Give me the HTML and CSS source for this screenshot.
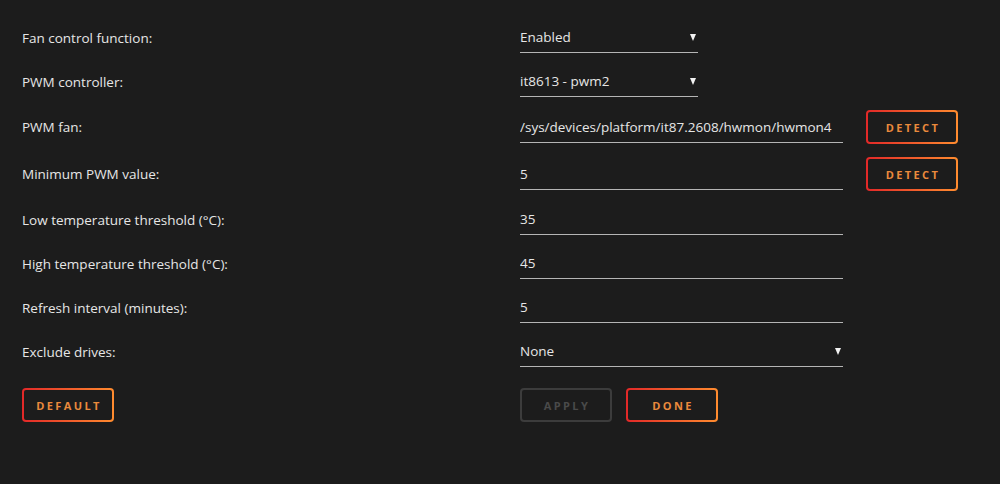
FILE: index.html
```html
<!DOCTYPE html>
<html lang="en">
<head>
  <meta charset="UTF-8" />
  <title>Fan Auto Control</title>
  <link rel="stylesheet" href="styles.css">
</head>
<body>
  <form class="settings">
    <div class="row">
      <label>Fan control function:</label>
      <div class="field select short"><span>Enabled</span><i class="caret"></i></div>
    </div>
    <div class="row">
      <label>PWM controller:</label>
      <div class="field select short"><span>it8613 - pwm2</span><i class="caret"></i></div>
    </div>
    <div class="row">
      <label>PWM fan:</label>
      <div class="field"><span>/sys/devices/platform/it87.2608/hwmon/hwmon4</span></div>
      <button type="button" class="btn detect">Detect</button>
    </div>
    <div class="row">
      <label>Minimum PWM value:</label>
      <div class="field"><span>5</span></div>
      <button type="button" class="btn detect">Detect</button>
    </div>
    <div class="row">
      <label>Low temperature threshold (°C):</label>
      <div class="field"><span>35</span></div>
    </div>
    <div class="row">
      <label>High temperature threshold (°C):</label>
      <div class="field"><span>45</span></div>
    </div>
    <div class="row">
      <label>Refresh interval (minutes):</label>
      <div class="field"><span>5</span></div>
    </div>
    <div class="row">
      <label>Exclude drives:</label>
      <div class="field select"><span>None</span><i class="caret"></i></div>
    </div>
    <div class="row actions">
      <div class="left"><button type="button" class="btn">Default</button></div>
      <button type="button" class="btn" disabled>Apply</button>
      <button type="button" class="btn">Done</button>
    </div>
  </form>
</body>
</html>
```

FILE: styles.css
```css
html, body {
  margin: 0;
  background: #1c1c1c;
}
body {
  padding: 22px;
  font-family: "Open Sans", "Noto Sans", sans-serif;
  font-size: 13.5px;
  color: #e6e6e6;
}
.settings {
  display: flex;
  flex-direction: column;
  gap: 13px;
}
.row {
  display: flex;
  align-items: center;
}
.row label {
  width: 498px;
  flex: none;
  line-height: 30px;
}
.field {
  width: 323px;
  height: 30px;
  line-height: 30px;
  border-bottom: 1px solid #b5b5b5;
  display: flex;
  align-items: center;
  overflow: hidden;
  white-space: nowrap;
}
.field span {
  flex: 1;
}
.field.short {
  width: 178px;
}
.caret {
  width: 0;
  height: 0;
  border-left: 3.5px solid transparent;
  border-right: 3.5px solid transparent;
  border-top: 7px solid #f2f2f2;
  margin-right: 2px;
}
.btn {
  width: 92px;
  height: 34px;
  border: 2px solid transparent;
  border-radius: 4px;
  background: linear-gradient(#1c1c1c, #1c1c1c) padding-box,
              linear-gradient(90deg, #e22828, #ff8c2f) border-box;
  color: #ea8a3c;
  font-family: "Open Sans", "Noto Sans", sans-serif;
  font-size: 11px;
  font-weight: 700;
  letter-spacing: 2.4px;
  text-transform: uppercase;
  padding: 0 0 0 2px;
  cursor: pointer;
}
.btn:disabled {
  background: #1c1c1c;
  border-color: #3c3c3c;
  color: #4a4a4a;
  cursor: default;
}
.detect {
  margin-left: 23px;
}
.actions {
  margin-top: 8px;
  gap: 14px;
}
.actions .left {
  width: 498px;
  margin-right: -14px;
}
```
